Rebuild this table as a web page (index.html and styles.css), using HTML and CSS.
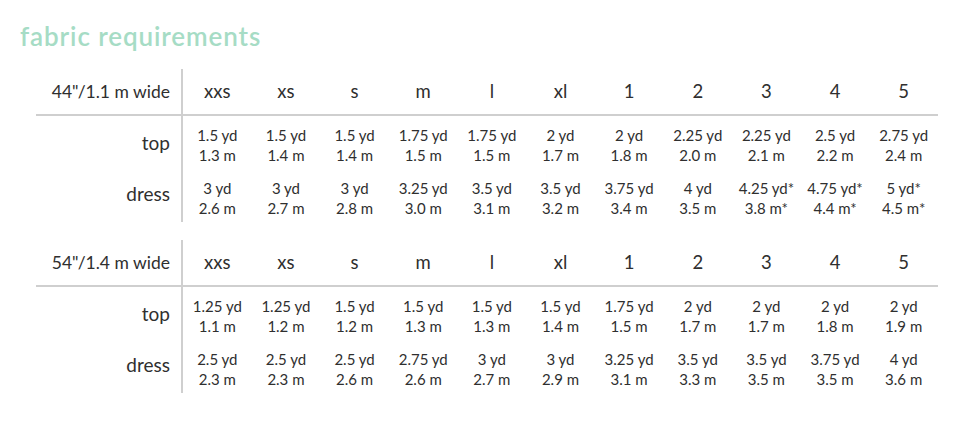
FILE: index.html
```html
<!DOCTYPE html>
<html>
<head>
<meta charset="utf-8">
<link rel="stylesheet" href="styles.css">
</head>
<body>
<h1 class="title">fabric requirements</h1>
<div class="req">
  <div class="grid">
    <div class="hd lbl">44"/1.1 m wide</div>
    <div class="hd">xxs</div><div class="hd">xs</div><div class="hd">s</div><div class="hd">m</div><div class="hd">l</div><div class="hd">xl</div><div class="hd">1</div><div class="hd">2</div><div class="hd">3</div><div class="hd">4</div><div class="hd">5</div>

    <div class="r1 lbl name">top</div>
    <div class="r1 c"><span>1.5 yd</span><span>1.3 m</span></div>
    <div class="r1 c"><span>1.5 yd</span><span>1.4 m</span></div>
    <div class="r1 c"><span>1.5 yd</span><span>1.4 m</span></div>
    <div class="r1 c"><span>1.75 yd</span><span>1.5 m</span></div>
    <div class="r1 c"><span>1.75 yd</span><span>1.5 m</span></div>
    <div class="r1 c"><span>2 yd</span><span>1.7 m</span></div>
    <div class="r1 c"><span>2 yd</span><span>1.8 m</span></div>
    <div class="r1 c"><span>2.25 yd</span><span>2.0 m</span></div>
    <div class="r1 c"><span>2.25 yd</span><span>2.1 m</span></div>
    <div class="r1 c"><span>2.5 yd</span><span>2.2 m</span></div>
    <div class="r1 c"><span>2.75 yd</span><span>2.4 m</span></div>

    <div class="r2 lbl name">dress</div>
    <div class="r2 c"><span>3 yd</span><span>2.6 m</span></div>
    <div class="r2 c"><span>3 yd</span><span>2.7 m</span></div>
    <div class="r2 c"><span>3 yd</span><span>2.8 m</span></div>
    <div class="r2 c"><span>3.25 yd</span><span>3.0 m</span></div>
    <div class="r2 c"><span>3.5 yd</span><span>3.1 m</span></div>
    <div class="r2 c"><span>3.5 yd</span><span>3.2 m</span></div>
    <div class="r2 c"><span>3.75 yd</span><span>3.4 m</span></div>
    <div class="r2 c"><span>4 yd</span><span>3.5 m</span></div>
    <div class="r2 c"><span>4.25 yd*</span><span>3.8 m*</span></div>
    <div class="r2 c"><span>4.75 yd*</span><span>4.4 m*</span></div>
    <div class="r2 c"><span>5 yd*</span><span>4.5 m*</span></div>
  </div>

  <div class="grid">
    <div class="hd lbl">54"/1.4 m wide</div>
    <div class="hd">xxs</div><div class="hd">xs</div><div class="hd">s</div><div class="hd">m</div><div class="hd">l</div><div class="hd">xl</div><div class="hd">1</div><div class="hd">2</div><div class="hd">3</div><div class="hd">4</div><div class="hd">5</div>

    <div class="r1 lbl name">top</div>
    <div class="r1 c"><span>1.25 yd</span><span>1.1 m</span></div>
    <div class="r1 c"><span>1.25 yd</span><span>1.2 m</span></div>
    <div class="r1 c"><span>1.5 yd</span><span>1.2 m</span></div>
    <div class="r1 c"><span>1.5 yd</span><span>1.3 m</span></div>
    <div class="r1 c"><span>1.5 yd</span><span>1.3 m</span></div>
    <div class="r1 c"><span>1.5 yd</span><span>1.4 m</span></div>
    <div class="r1 c"><span>1.75 yd</span><span>1.5 m</span></div>
    <div class="r1 c"><span>2 yd</span><span>1.7 m</span></div>
    <div class="r1 c"><span>2 yd</span><span>1.7 m</span></div>
    <div class="r1 c"><span>2 yd</span><span>1.8 m</span></div>
    <div class="r1 c"><span>2 yd</span><span>1.9 m</span></div>

    <div class="r2 lbl name">dress</div>
    <div class="r2 c"><span>2.5 yd</span><span>2.3 m</span></div>
    <div class="r2 c"><span>2.5 yd</span><span>2.3 m</span></div>
    <div class="r2 c"><span>2.5 yd</span><span>2.6 m</span></div>
    <div class="r2 c"><span>2.75 yd</span><span>2.6 m</span></div>
    <div class="r2 c"><span>3 yd</span><span>2.7 m</span></div>
    <div class="r2 c"><span>3 yd</span><span>2.9 m</span></div>
    <div class="r2 c"><span>3.25 yd</span><span>3.1 m</span></div>
    <div class="r2 c"><span>3.5 yd</span><span>3.3 m</span></div>
    <div class="r2 c"><span>3.5 yd</span><span>3.5 m</span></div>
    <div class="r2 c"><span>3.75 yd</span><span>3.5 m</span></div>
    <div class="r2 c"><span>4 yd</span><span>3.6 m</span></div>
  </div>
</div>
</body>
</html>
```

FILE: styles.css
```css
* { box-sizing: border-box; }
html, body { margin: 0; padding: 0; background: #fff; }
body {
  font-family: Lato, "Noto Sans", sans-serif;
  color: #2f2f2f;
  width: 968px;
  height: 437px;
  overflow: hidden;
}
.title {
  margin: 0;
  padding: 20px 0 0 20px;
  height: 69px;
  font-size: 26px;
  line-height: 32px;
  font-weight: 600;
  color: #a6dcc5;
  letter-spacing: 0.9px;
}
.req {
  display: flex;
  flex-direction: column;
  gap: 18px;
  padding-left: 36px;
}
.grid {
  display: grid;
  width: 902px;
  grid-template-columns: 147px repeat(11, 1fr);
  grid-template-rows: 47px 57px 49px;
}
.hd {
  display: flex;
  align-items: center;
  justify-content: center;
  font-size: 18.5px;
  border-bottom: 2px solid #cfcfcf;
  padding-bottom: 1px;
}
.hd.lbl { font-size: 17.5px; }
.lbl {
  justify-content: flex-end;
  padding-right: 11px;
  border-right: 2px solid #cfcfcf;
}
.c {
  display: flex;
  flex-direction: column;
  align-items: center;
  font-size: 15px;
  line-height: 20px;
}
.name {
  display: flex;
  font-size: 19px;
  line-height: 40px;
  align-items: flex-start;
}
.r1 { padding-top: 9px; }
.r2 { padding-top: 5px; }
.r1.name { padding-top: 7px; }
.r2.name { padding-top: 1px; }
```
